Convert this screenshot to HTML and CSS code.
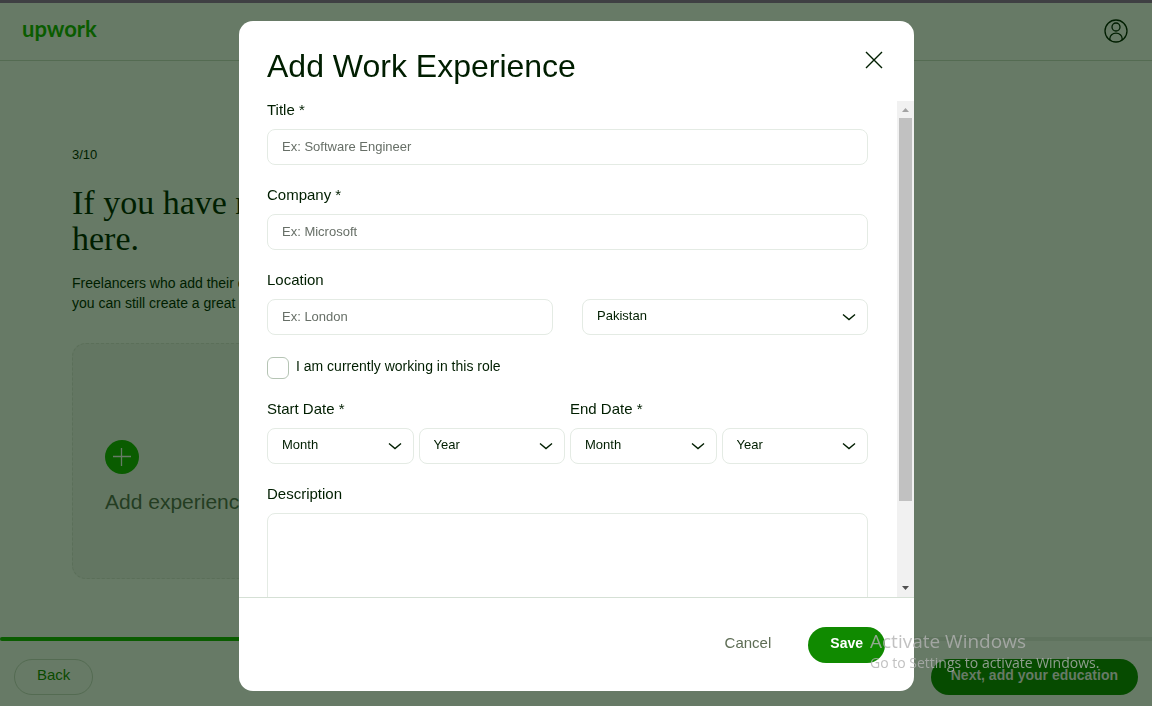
FILE: index.html
```html
<!DOCTYPE html>
<html lang="en">
<head>
<meta charset="utf-8">
<meta name="viewport" content="width=device-width, initial-scale=1">
<title>Add Work Experience</title>
<link rel="stylesheet" href="styles.css">
</head>
<body>
<div class="page">
  <header class="topbar">
    <a class="logo" href="#">upwork</a>
    <button class="account" type="button" aria-label="Account">
      <svg width="24" height="24" viewBox="0 0 24 24" fill="none" stroke="currentColor" stroke-width="1.3">
        <circle cx="12" cy="12" r="11"/>
        <circle cx="12" cy="8" r="4"/>
        <path d="M5.800 21v-1.200a6.200 5.600 0 0 1 12.400 0V21"/>
      </svg>
    </button>
  </header>
  <main class="content">
    <p class="step">3/10</p>
    <h1 class="headline">If you have relevant work experience, add it<br>here.</h1>
    <p class="intro">Freelancers who add their experience are twice as likely to win work. But if you're just starting out,<br>you can still create a great profile. Just head on to the next page.</p>
    <button class="add-card" type="button">
      <svg class="plus" width="34" height="34" viewBox="0 0 34 34">
        <circle cx="17" cy="17" r="17" fill="#0a5c00"/>
        <path d="M8 16.500h18M16.500 8v18" stroke="#677a66" stroke-width="1.3"/>
      </svg>
      <span>Add experience</span>
    </button>
  </main>
  <div class="progress"><div class="progress-fill"></div></div>
  <footer class="actions">
    <button class="pill back" type="button">Back</button>
    <button class="pill next" type="button">Next, add your education</button>
  </footer>
</div>

<div class="overlay">
  <section class="modal" role="dialog" aria-labelledby="modal-title">
    <header class="modal-header">
      <h2 class="modal-title" id="modal-title">Add Work Experience</h2>
      <button class="close" type="button" aria-label="Close">
        <svg width="18" height="18" viewBox="0 0 18 18" stroke="currentColor" stroke-width="1.4"><path d="M1 1l16 16M17 1L1 17"/></svg>
      </button>
    </header>
    <div class="modal-body">
      <form class="form" id="experience">
        <div class="field">
          <label class="label" for="title">Title *</label>
          <input class="control" id="title" type="text" placeholder="Ex: Software Engineer">
        </div>
        <div class="field">
          <label class="label" for="company">Company *</label>
          <input class="control" id="company" type="text" placeholder="Ex: Microsoft">
        </div>
        <div class="location">
          <div class="field">
            <label class="label" for="city">Location</label>
            <input class="control" id="city" type="text" placeholder="Ex: London">
          </div>
          <div class="select">
            <select class="control" aria-label="Country"><option>Pakistan</option></select>
            <svg class="chevron" width="14" height="8" viewBox="0 0 14 8"><path d="M1 1.500l6 5 6-5"/></svg>
          </div>
        </div>
        <label class="check"><input class="checkbox" type="checkbox"><span class="check-text">I am currently working in this role</span></label>
        <div class="dates">
          <div class="field" role="group" aria-labelledby="start-label">
            <label class="label" id="start-label" for="start-month">Start Date *</label>
            <div class="pair">
              <div class="select">
                <select class="control" id="start-month"><option>Month</option></select>
                <svg class="chevron" width="14" height="8" viewBox="0 0 14 8"><path d="M1 1.500l6 5 6-5"/></svg>
              </div>
              <div class="select">
                <select class="control" aria-label="Start year"><option>Year</option></select>
                <svg class="chevron" width="14" height="8" viewBox="0 0 14 8"><path d="M1 1.500l6 5 6-5"/></svg>
              </div>
            </div>
          </div>
          <div class="field" role="group" aria-labelledby="end-label">
            <label class="label" id="end-label" for="end-month">End Date *</label>
            <div class="pair">
              <div class="select">
                <select class="control" id="end-month"><option>Month</option></select>
                <svg class="chevron" width="14" height="8" viewBox="0 0 14 8"><path d="M1 1.500l6 5 6-5"/></svg>
              </div>
              <div class="select">
                <select class="control" aria-label="End year"><option>Year</option></select>
                <svg class="chevron" width="14" height="8" viewBox="0 0 14 8"><path d="M1 1.500l6 5 6-5"/></svg>
              </div>
            </div>
          </div>
        </div>
        <div class="field">
          <label class="label" for="description">Description</label>
          <textarea class="control description" id="description"></textarea>
        </div>
      </form>
      <div class="scrollbar" aria-hidden="true">
        <svg class="arrow up" width="17" height="17" viewBox="0 0 17 17"><path d="M5 11l3.500-4 3.500 4z"/></svg>
        <div class="track"><div class="thumb"></div></div>
        <svg class="arrow down" width="17" height="17" viewBox="0 0 17 17"><path d="M5 6l3.500 4 3.500-4z"/></svg>
      </div>
    </div>
    <footer class="modal-footer">
      <button class="pill cancel" type="button">Cancel</button>
      <button class="pill save" type="submit" form="experience">Save</button>
    </footer>
  </section>
</div>

<aside class="watermark">
  <p class="watermark-title">Activate Windows</p>
  <p class="watermark-text">Go to Settings to activate Windows.</p>
</aside>
</body>
</html>
```
FILE: styles.css
```css
* { box-sizing: border-box; }

body, h1, h2, p { margin: 0; }

body {
  font: 15px/20px "Liberation Sans", Arial, sans-serif;
  color: #001e00;
  background: #677a66;
  overflow: hidden;
}

button {
  font: inherit;
  color: inherit;
  background: none;
  border: 0;
  padding: 0;
  cursor: pointer;
}

svg { display: block; }

.page {
  min-height: 100vh;
  display: flex;
  flex-direction: column;
  border-top: 3px solid #3f4043;
}

.topbar {
  display: flex;
  align-items: center;
  justify-content: space-between;
  height: 58px;
  padding: 0 24px 2px 22px;
  border-bottom: 1px solid #546b52;
}

.logo {
  padding-bottom: 3px;
  font: 700 22px/26px Lato, sans-serif;
  color: #0a5c00;
  text-decoration: none;
}

.content {
  flex: 1;
  padding: 84px 72px 0;
}

.step { font-size: 13px; }

.headline {
  margin-top: 20px;
  font: 34px/36px "Liberation Serif", serif;
  white-space: nowrap;
}

.intro {
  margin-top: 16px;
  font-size: 14px;
  white-space: nowrap;
}

.add-card {
  display: flex;
  flex-direction: column;
  align-items: flex-start;
  gap: 15px;
  width: 344px;
  height: 236px;
  margin-top: 30px;
  padding: 96px 32px 62px;
  border: 1px dashed #5b6f59;
  border-radius: 14px;
  background: #637662;
  font-size: 21px;
  line-height: 26px;
  color: #243d22;
}

.plus { flex-shrink: 0; }

.progress { height: 4px; background: #5f735e; }

.progress-fill {
  width: 30%;
  height: 100%;
  border-radius: 2px;
  background: #0a5c00;
}

.actions {
  display: flex;
  justify-content: space-between;
  padding: 18px 14px 11px;
}

.pill {
  height: 36px;
  padding: 0 22px 4px;
  border-radius: 18px;
}

.back { border: 1px solid #546b52; color: #0a4a00; }

.next {
  padding: 0 20px 4px;
  background: #064b00;
  color: #677a66;
  font-size: 14px;
  font-weight: 700;
}

.overlay {
  position: fixed;
  inset: 0;
  display: flex;
  justify-content: center;
  padding: 21px 16px 15px 17px;
}

.modal {
  display: flex;
  flex-direction: column;
  width: 100%;
  max-width: 675px;
  border-radius: 14px;
  background: #fff;
  overflow: hidden;
}

.modal-header {
  display: flex;
  align-items: flex-start;
  justify-content: space-between;
  padding: 25px 31px 15px 28px;
}

.modal-title { font-size: 32px; line-height: 40px; font-weight: 400; }

.close { padding-top: 5px; }

.modal-body {
  flex: 1;
  min-height: 0;
  display: flex;
}

.form {
  flex: 1;
  min-width: 0;
  display: flex;
  flex-direction: column;
  gap: 21px;
  padding: 0 29px 21px 28px;
  overflow-y: auto;
  scrollbar-width: none;
}

.field {
  display: flex;
  flex-direction: column;
  gap: 10px;
  min-width: 0;
}

.label { line-height: 18px; }

.control {
  width: 100%;
  height: 36px;
  padding: 0 14px 2px;
  border: 1px solid #e4ebe4;
  border-radius: 8px;
  background: #fff;
  font: 13px/20px "Liberation Sans", Arial, sans-serif;
  color: #001e00;
}

.control::placeholder { color: #676f67; opacity: 1; }

.select {
  display: grid;
  align-items: center;
}

.select > * { grid-area: 1 / 1; }

select.control { appearance: none; padding-bottom: 3px; }

.chevron {
  justify-self: end;
  margin-right: 12px;
  fill: none;
  stroke: #001e00;
  stroke-width: 1.4;
  pointer-events: none;
}

.location {
  display: grid;
  grid-template-columns: 1fr 1fr;
  gap: 29px;
  align-items: end;
}

.check {
  display: flex;
  align-items: center;
  gap: 7px;
  height: 23px;
  flex-shrink: 0;
  font-size: 14px;
}

.check-text { padding-bottom: 3px; }

.checkbox {
  appearance: none;
  width: 22px;
  height: 22px;
  margin: 0;
  border: 1px solid #b5c4b4;
  border-radius: 6px;
}

.dates, .pair {
  display: grid;
  grid-template-columns: 1fr 1fr;
  gap: 5px;
}

.description { height: 150px; padding: 8px 14px; resize: none; }

.scrollbar {
  display: flex;
  flex-direction: column;
  width: 17px;
  background: #f1f1f1;
}

.arrow.up { fill: #a3a3a3; }
.arrow.down { fill: #505050; }

.track { flex: 1; padding: 0 2px; }

.thumb { height: 83%; background: #c1c1c1; }

.modal-footer {
  display: flex;
  justify-content: flex-end;
  gap: 15px;
  padding: 29px 29px 28px;
  border-top: 1px solid #d5e0d5;
}

.cancel { color: #5e6d55; }

.save {
  background: #108a00;
  color: #fff;
  font-size: 14px;
  font-weight: 700;
}

.watermark {
  position: fixed;
  right: 46px;
  bottom: 33px;
  width: 236px;
  font-family: "Open Sans", sans-serif;
  color: rgba(178, 178, 178, 0.8);
  white-space: nowrap;
  pointer-events: none;
}

.watermark-title { font-size: 19px; line-height: 24px; }
.watermark-text { font-size: 14px; line-height: 20px; }
```
